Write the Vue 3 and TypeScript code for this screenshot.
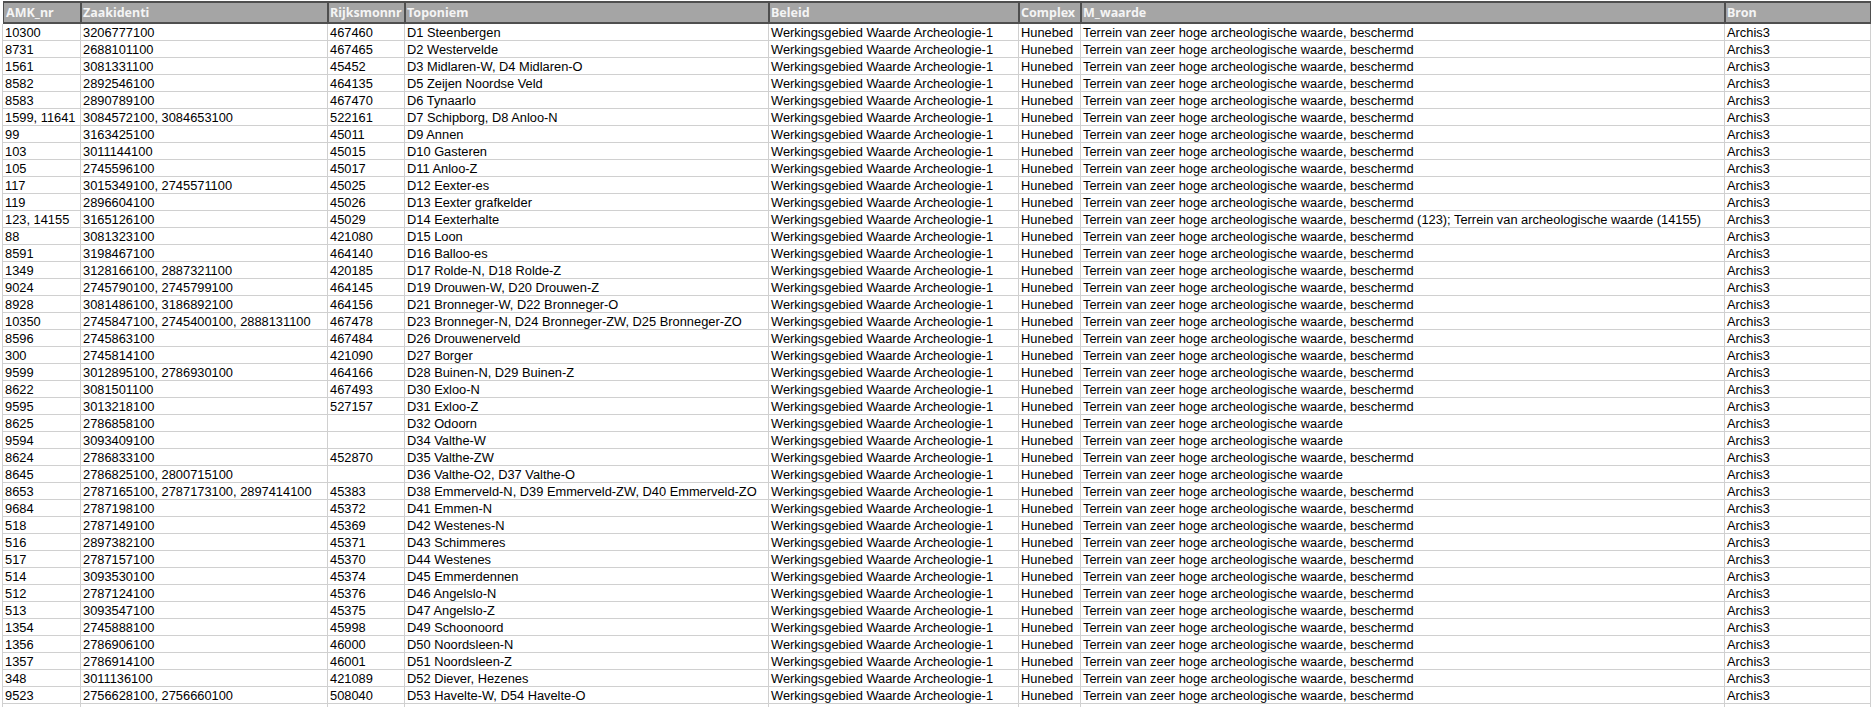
<script setup lang="ts">
const headers: string[] = ['AMK_nr', 'Zaakidenti', 'Rijksmonnr', 'Toponiem', 'Beleid', 'Complex', 'M_waarde', 'Bron']
const hoog = 'Terrein van zeer hoge archeologische waarde'
const besch = hoog + ', beschermd'
const raw: [string, string, string, string, string?][] = [
  ['10300', '3206777100', '467460', 'D1 Steenbergen'],
  ['8731', '2688101100', '467465', 'D2 Westervelde'],
  ['1561', '3081331100', '45452', 'D3 Midlaren-W, D4 Midlaren-O'],
  ['8582', '2892546100', '464135', 'D5 Zeijen Noordse Veld'],
  ['8583', '2890789100', '467470', 'D6 Tynaarlo'],
  ['1599, 11641', '3084572100, 3084653100', '522161', 'D7 Schipborg, D8 Anloo-N'],
  ['99', '3163425100', '45011', 'D9 Annen'],
  ['103', '3011144100', '45015', 'D10 Gasteren'],
  ['105', '2745596100', '45017', 'D11 Anloo-Z'],
  ['117', '3015349100, 2745571100', '45025', 'D12 Eexter-es'],
  ['119', '2896604100', '45026', 'D13 Eexter grafkelder'],
  ['123, 14155', '3165126100', '45029', 'D14 Eexterhalte', besch + ' (123); Terrein van archeologische waarde (14155)'],
  ['88', '3081323100', '421080', 'D15 Loon'],
  ['8591', '3198467100', '464140', 'D16 Balloo-es'],
  ['1349', '3128166100, 2887321100', '420185', 'D17 Rolde-N, D18 Rolde-Z'],
  ['9024', '2745790100, 2745799100', '464145', 'D19 Drouwen-W, D20 Drouwen-Z'],
  ['8928', '3081486100, 3186892100', '464156', 'D21 Bronneger-W, D22 Bronneger-O'],
  ['10350', '2745847100, 2745400100, 2888131100', '467478', 'D23 Bronneger-N, D24 Bronneger-ZW, D25 Bronneger-ZO'],
  ['8596', '2745863100', '467484', 'D26 Drouwenerveld'],
  ['300', '2745814100', '421090', 'D27 Borger'],
  ['9599', '3012895100, 2786930100', '464166', 'D28 Buinen-N, D29 Buinen-Z'],
  ['8622', '3081501100', '467493', 'D30 Exloo-N'],
  ['9595', '3013218100', '527157', 'D31 Exloo-Z'],
  ['8625', '2786858100', '', 'D32 Odoorn', hoog],
  ['9594', '3093409100', '', 'D34 Valthe-W', hoog],
  ['8624', '2786833100', '452870', 'D35 Valthe-ZW'],
  ['8645', '2786825100, 2800715100', '', 'D36 Valthe-O2, D37 Valthe-O', hoog],
  ['8653', '2787165100, 2787173100, 2897414100', '45383', 'D38 Emmerveld-N, D39 Emmerveld-ZW, D40 Emmerveld-ZO'],
  ['9684', '2787198100', '45372', 'D41 Emmen-N'],
  ['518', '2787149100', '45369', 'D42 Westenes-N'],
  ['516', '2897382100', '45371', 'D43 Schimmeres'],
  ['517', '2787157100', '45370', 'D44 Westenes'],
  ['514', '3093530100', '45374', 'D45 Emmerdennen'],
  ['512', '2787124100', '45376', 'D46 Angelslo-N'],
  ['513', '3093547100', '45375', 'D47 Angelslo-Z'],
  ['1354', '2745888100', '45998', 'D49 Schoonoord'],
  ['1356', '2786906100', '46000', 'D50 Noordsleen-N'],
  ['1357', '2786914100', '46001', 'D51 Noordsleen-Z'],
  ['348', '3011136100', '421089', 'D52 Diever, Hezenes'],
  ['9523', '2756628100, 2756660100', '508040', 'D53 Havelte-W, D54 Havelte-O'],
]
const rows = raw.map((r) => [r[0], r[1], r[2], r[3], 'Werkingsgebied Waarde Archeologie-1', 'Hunebed', r[4] ?? besch, 'Archis3'])
</script>

<template>
  <div class="sheet">
    <div class="row head">
      <div v-for="h in headers" :key="h" class="cell">{{ h }}</div>
    </div>
    <div v-for="(r, i) in rows" :key="i" class="row body">
      <div v-for="(c, j) in r" :key="j" class="cell">{{ c }}</div>
    </div>
    <div class="row stub">
      <div v-for="h in headers" :key="h" class="cell"></div>
    </div>
  </div>
</template>

<style>
html, body { margin: 0; background: #fff; overflow: hidden; }
</style>

<style scoped>
.sheet {
  width: 1871px;
  height: 707px;
  overflow: hidden;
  padding-left: 2px;
  padding-top: 1px;
  box-sizing: border-box;
  font-family: "Liberation Sans", Arial, sans-serif;
}
.row {
  display: grid;
  grid-template-columns: 78px 247px 77px 364px 250px 62px 644px 146px;
  border-left: 1px solid #d0d0d0;
}
.cell {
  white-space: nowrap;
  box-sizing: border-box;
}
.head {
  height: 23px;
  border-left-color: #fff;
}
.head .cell {
  background: #a5a5a5;
  font-family: "Noto Sans", sans-serif;
  font-weight: 700;
  font-size: 12.5px;
  line-height: 19px;
  color: #f4f4f4;
  border: 2px solid #4f4f4f;
  border-left-width: 1px;
  border-right-width: 1px;
  padding-left: 1px;
}
.head .cell:first-child { padding-left: 2px; }
.body {
  height: 17px;
  border-bottom: 1px solid #d0d0d0;
  box-sizing: border-box;
}
.body .cell {
  font-size: 12.85px;
  line-height: 17px;
  height: 16px;
  color: #000;
  padding-left: 2px;
  border-right: 1px solid #d0d0d0;
}
.stub { height: 4px; }
.stub .cell { border-right: 1px solid #d0d0d0; }
</style>
